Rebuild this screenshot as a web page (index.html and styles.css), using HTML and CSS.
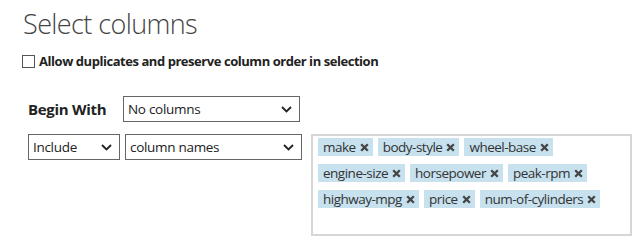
FILE: index.html
```html
<!DOCTYPE html>
<html lang="en">
<head>
    <meta charset="UTF-8">
    <title>Select columns</title>
    <link rel="stylesheet" href="styles.css">
</head>
<body>
    <h1 class="title">Select columns</h1>

    <label class="check">
        <span class="box"></span>
        Allow duplicates and preserve column order in selection
    </label>

    <!-- Begin With row -->
    <div class="row first">
        <span class="label">Begin With</span>
        <div class="select wide">
            <span>No columns</span>
            <svg width="11" height="7" viewBox="0 0 11 7"><path d="M1 1 L5.5 5.5 L10 1" fill="none" stroke="#222" stroke-width="1.8"/></svg>
        </div>
    </div>

    <!-- Rule row -->
    <div class="row rule">
        <div class="select small">
            <span>Include</span>
            <svg width="11" height="7" viewBox="0 0 11 7"><path d="M1 1 L5.5 5.5 L10 1" fill="none" stroke="#222" stroke-width="1.8"/></svg>
        </div>
        <div class="select wide">
            <span>column names</span>
            <svg width="11" height="7" viewBox="0 0 11 7"><path d="M1 1 L5.5 5.5 L10 1" fill="none" stroke="#222" stroke-width="1.8"/></svg>
        </div>
        <div class="tags">
            <span class="tag">make <svg class="x" viewBox="0 0 9 9"><path d="M1.2 1.2 L7.8 7.8 M7.8 1.2 L1.2 7.8"/></svg></span>
            <span class="tag">body-style <svg class="x" viewBox="0 0 9 9"><path d="M1.2 1.2 L7.8 7.8 M7.8 1.2 L1.2 7.8"/></svg></span>
            <span class="tag">wheel-base <svg class="x" viewBox="0 0 9 9"><path d="M1.2 1.2 L7.8 7.8 M7.8 1.2 L1.2 7.8"/></svg></span>
            <span class="tag">engine-size <svg class="x" viewBox="0 0 9 9"><path d="M1.2 1.2 L7.8 7.8 M7.8 1.2 L1.2 7.8"/></svg></span>
            <span class="tag">horsepower <svg class="x" viewBox="0 0 9 9"><path d="M1.2 1.2 L7.8 7.8 M7.8 1.2 L1.2 7.8"/></svg></span>
            <span class="tag">peak-rpm <svg class="x" viewBox="0 0 9 9"><path d="M1.2 1.2 L7.8 7.8 M7.8 1.2 L1.2 7.8"/></svg></span>
            <span class="tag">highway-mpg <svg class="x" viewBox="0 0 9 9"><path d="M1.2 1.2 L7.8 7.8 M7.8 1.2 L1.2 7.8"/></svg></span>
            <span class="tag">price <svg class="x" viewBox="0 0 9 9"><path d="M1.2 1.2 L7.8 7.8 M7.8 1.2 L1.2 7.8"/></svg></span>
            <span class="tag">num-of-cylinders <svg class="x" viewBox="0 0 9 9"><path d="M1.2 1.2 L7.8 7.8 M7.8 1.2 L1.2 7.8"/></svg></span>
        </div>
    </div>
</body>
</html>
```

FILE: styles.css
```css
body {
    margin: 0;
    padding: 0 0 0 24px;
    font-family: "Open Sans", Arial, sans-serif;
    color: #333;
    background: #fff;
}
.title {
    margin: 6px 0 0 -1px;
    font-size: 27px;
    font-weight: 300;
    color: #444;
    line-height: 36px;
    letter-spacing: -0.6px;
}
.check {
    display: flex;
    align-items: center;
    gap: 4px;
    margin: 10px 0 0 -2px;
    font-size: 13px;
    font-weight: 700;
    color: #222;
    letter-spacing: -0.45px;
}
.box {
    width: 11px;
    height: 11px;
    border: 1px solid #555;
}
.row {
    display: flex;
    align-items: flex-start;
}
.first {
    margin-top: 26px;
    align-items: center;
}
.label {
    width: 95px;
    padding-left: 4px;
    font-size: 15px;
    font-weight: 700;
    color: #222;
    letter-spacing: -0.3px;
}
.select {
    display: flex;
    align-items: center;
    justify-content: space-between;
    box-sizing: border-box;
    height: 26px;
    padding: 0 7px 0 4px;
    border: 1px solid #666;
    font-size: 13.5px;
    color: #222;
    letter-spacing: -0.3px;
}
.wide {
    width: 177px;
}
.small {
    width: 92px;
    margin: 0 5px 0 4px;
}
.rule {
    margin-top: 12px;
}
.tags {
    box-sizing: border-box;
    width: 321px;
    height: 102px;
    margin-left: 9px;
    padding: 2px 0 0 5px;
    border: 2px solid #d6d6d6;
    display: flex;
    flex-wrap: wrap;
    align-content: flex-start;
    gap: 8px 5px;
}
.tag {
    display: flex;
    align-items: center;
    gap: 4px;
    height: 18px;
    padding: 0 4px 0 5px;
    background: #c7e1ee;
    font-size: 13.5px;
    color: #333;
    letter-spacing: -0.5px;
}
.x {
    width: 9px;
    height: 9px;
    fill: none;
    stroke: #444;
    stroke-width: 2.3;
}
```
